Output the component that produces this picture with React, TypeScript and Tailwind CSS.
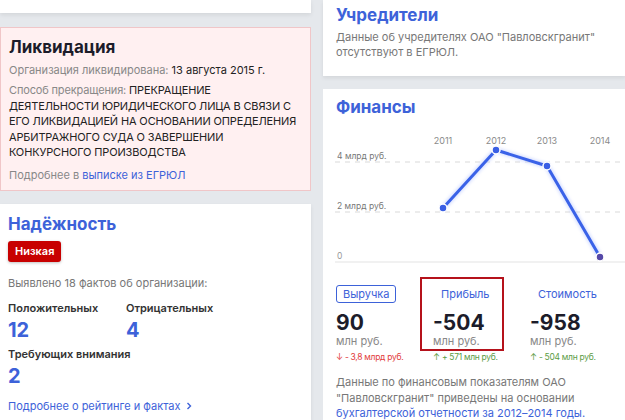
const font = { fontFamily: 'Inter, "Noto Sans", sans-serif' }

const points = [
  { year: '2011', x: 108, y: 78 },
  { year: '2012', x: 161, y: 20 },
  { year: '2013', x: 212, y: 36 },
  { year: '2014', x: 265, y: 127 },
]

const metrics = [
  { tab: 'Выручка', value: '90', change: '↓ - 3,8 млрд руб.', tone: 'text-[#e23b3b]', active: true, boxed: false },
  { tab: 'Прибыль', value: '-504', change: '↑ + 571 млн руб.', tone: 'text-[#5c9c45]', active: false, boxed: true },
  { tab: 'Стоимость', value: '-958', change: '↑ - 504 млн руб.', tone: 'text-[#5c9c45]', active: false, boxed: false },
]

const FinanceChart = () => (
  <svg width="290" height="138" viewBox="0 0 290 138" className="block">
    <defs>
      <filter id="glow" x="-20%" y="-20%" width="140%" height="140%">
        <feGaussianBlur stdDeviation="1.5" />
      </filter>
    </defs>
    {points.map((p) => (
      <text key={p.year} x={p.x} y={14} textAnchor="middle" fontSize="9" fill="#8a8a8a" style={font}>
        {p.year}
      </text>
    ))}
    <line x1="0" y1="32" x2="290" y2="32" stroke="#d9d9d9" strokeDasharray="5 5" />
    <line x1="0" y1="82" x2="290" y2="82" stroke="#d9d9d9" strokeDasharray="5 5" />
    <line x1="0" y1="132" x2="290" y2="132" stroke="#e3e3e3" />
    <text x="2" y="29" fontSize="8.5" fill="#777" style={font}>4 млрд руб.</text>
    <text x="2" y="79" fontSize="8.5" fill="#777" style={font}>2 млрд руб.</text>
    <text x="2" y="129" fontSize="8.5" fill="#999" style={font}>0</text>
    <polyline
      points={points.map((p) => `${p.x},${p.y}`).join(' ')}
      fill="none"
      stroke="#b7c6ff"
      strokeWidth="6"
      strokeLinejoin="round"
      filter="url(#glow)"
      opacity="0.5"
    />
    <polyline
      points={points.map((p) => `${p.x},${p.y}`).join(' ')}
      fill="none"
      stroke="#3a62e8"
      strokeWidth="3"
      strokeLinejoin="round"
    />
    {points.map((p, i) => (
      <circle
        key={p.year}
        cx={p.x}
        cy={p.y}
        r="4"
        fill={i === 3 ? '#5548a8' : '#3a5fe4'}
        stroke="#fff"
        strokeWidth="1.5"
      />
    ))}
  </svg>
)

export default function App() {
  return (
    <div
      className="flex h-[420px] w-[625px] gap-[12px] overflow-hidden bg-[#e5e8ec] text-[#222]"
      style={font}
    >
      <div className="flex w-[311px] shrink-0 flex-col">
        <div className="h-[13px] shrink-0 bg-white shadow-[0_2px_4px_rgba(0,0,0,0.08)]" />

        <div className="mt-[14px] shrink-0 border border-[#f0c6c8] bg-[#fff0f1] px-[8px] pt-[8px] pb-[7px]">
          <h2 className="text-[17px] font-bold leading-[22px] text-[#1c1c2a]">Ликвидация</h2>
          <p className="mt-[4px] text-[11px] leading-[16px] text-[#888]">
            Организация ликвидирована: <span className="text-[#222]">13 августа 2015 г.</span>
          </p>
          <p className="mt-[5px] whitespace-nowrap text-[11px] leading-[15.5px] tracking-[-0.15px] text-[#888]">
            Способ прекращения:{' '}
            <span className="text-[#222]">
              ПРЕКРАЩЕНИЕ
              <br />
              ДЕЯТЕЛЬНОСТИ ЮРИДИЧЕСКОГО ЛИЦА В СВЯЗИ С
              <br />
              ЕГО ЛИКВИДАЦИЕЙ НА ОСНОВАНИИ ОПРЕДЕЛЕНИЯ
              <br />
              АРБИТРАЖНОГО СУДА О ЗАВЕРШЕНИИ
              <br />
              КОНКУРСНОГО ПРОИЗВОДСТВА
            </span>
          </p>
          <p className="mt-[6px] text-[11px] leading-[16px] text-[#888]">
            Подробнее в <span className="text-[#3d62d9]">выписке из ЕГРЮЛ</span>
          </p>
        </div>

        <div className="mt-[13px] flex-1 shrink-0 bg-white px-[8px] pt-[9px] shadow-[0_2px_4px_rgba(0,0,0,0.08)]">
          <h2 className="text-[17px] font-bold leading-[22px] text-[#3d62d9]">Надёжность</h2>
          <span className="mt-[6px] inline-block rounded-[3px] bg-[#c80000] px-[7px] text-[11px] font-semibold leading-[21px] text-white shadow-[0_1px_3px_rgba(0,0,0,0.25)]">
            Низкая
          </span>
          <p className="mt-[13px] text-[11px] leading-[16px] text-[#777]">
            Выявлено 18 фактов об организации:
          </p>
          <div className="mt-[9px] grid grid-cols-[118px_1fr]">
            <div>
              <div className="text-[11px] font-semibold leading-[16px] text-[#333]">Положительных</div>
              <div className="mt-[3px] text-[20px] font-bold leading-[22px] text-[#3d62d9]">12</div>
            </div>
            <div>
              <div className="text-[11px] font-semibold leading-[16px] text-[#333]">Отрицательных</div>
              <div className="mt-[3px] text-[20px] font-bold leading-[22px] text-[#3d62d9]">4</div>
            </div>
          </div>
          <div className="mt-[5px] text-[11px] font-semibold leading-[16px] text-[#333]">Требующих внимания</div>
          <div className="mt-[3px] text-[20px] font-bold leading-[22px] text-[#3d62d9]">2</div>
          <p className="mt-[11px] flex items-center gap-[6px] text-[11px] leading-[16px] text-[#3d62d9]">
            Подробнее о рейтинге и фактах
            <svg width="6" height="8" viewBox="0 0 6 8">
              <path d="M1.5 1 L4.5 4 L1.5 7" fill="none" stroke="#3d62d9" strokeWidth="1.4" />
            </svg>
          </p>
        </div>
      </div>

      <div className="flex min-w-0 flex-1 flex-col">
        <div className="h-[76px] shrink-0 bg-white px-[13px] pt-[4px] shadow-[0_2px_4px_rgba(0,0,0,0.08)]">
          <h2 className="text-[17px] font-bold leading-[22px] text-[#3d62d9]">Учредители</h2>
          <p className="mt-[4px] w-[280px] text-[11px] leading-[15px] text-[#777]">
            Данные об учредителях ОАО "Павловскгранит" отсутствуют в ЕГРЮЛ.
          </p>
        </div>

        <div className="mt-[13px] flex-1 shrink-0 bg-white pl-[13px] pt-[7px]">
          <h2 className="text-[17px] font-bold leading-[22px] text-[#3d62d9]">Финансы</h2>
          <div className="-ml-[1px] mt-[12px]">
            <FinanceChart />
          </div>
          <div className="-ml-[13px] mt-[9px] grid grid-cols-[84px_84px_84px] gap-[13px]">
            {metrics.map((m) => (
              <div key={m.tab}>
                <div
                  className={
                    m.boxed
                      ? 'border-2 border-[#b5121b] pl-[11px] pt-[1px] pb-[1px]'
                      : 'border-2 border-transparent pl-[11px] pt-[1px] pb-[1px]'
                  }
                >
                  <span
                    className={
                      m.active
                        ? 'inline-block rounded-[3px] border border-[#3d62d9] px-[6px] text-[11px] leading-[16px] text-[#3d62d9]'
                        : 'ml-[1px] inline-block border border-transparent px-[6px] text-[11px] leading-[16px] text-[#3d62d9]'
                    }
                  >
                    {m.tab}
                  </span>
                  <div className="mt-[8px] text-[21px] font-bold leading-[22px] text-[#1c1c2a]">{m.value}</div>
                  <div className="text-[11px] leading-[14px] text-[#888]">млн руб.</div>
                </div>
                <div className={`whitespace-nowrap pl-[13px] text-[8.5px] leading-[12px] tracking-[-0.3px] ${m.tone}`}>
                  {m.change}
                </div>
              </div>
            ))}
          </div>
          <p className="mt-[12px] w-[280px] text-[11px] leading-[15.5px] text-[#777]">
            Данные по финансовым показателям ОАО "Павловскгранит" приведены на основании{' '}
            <span className="text-[#3d62d9]">бухгалтерской отчетности за 2012–2014 годы.</span>
          </p>
        </div>
      </div>
    </div>
  )
}
